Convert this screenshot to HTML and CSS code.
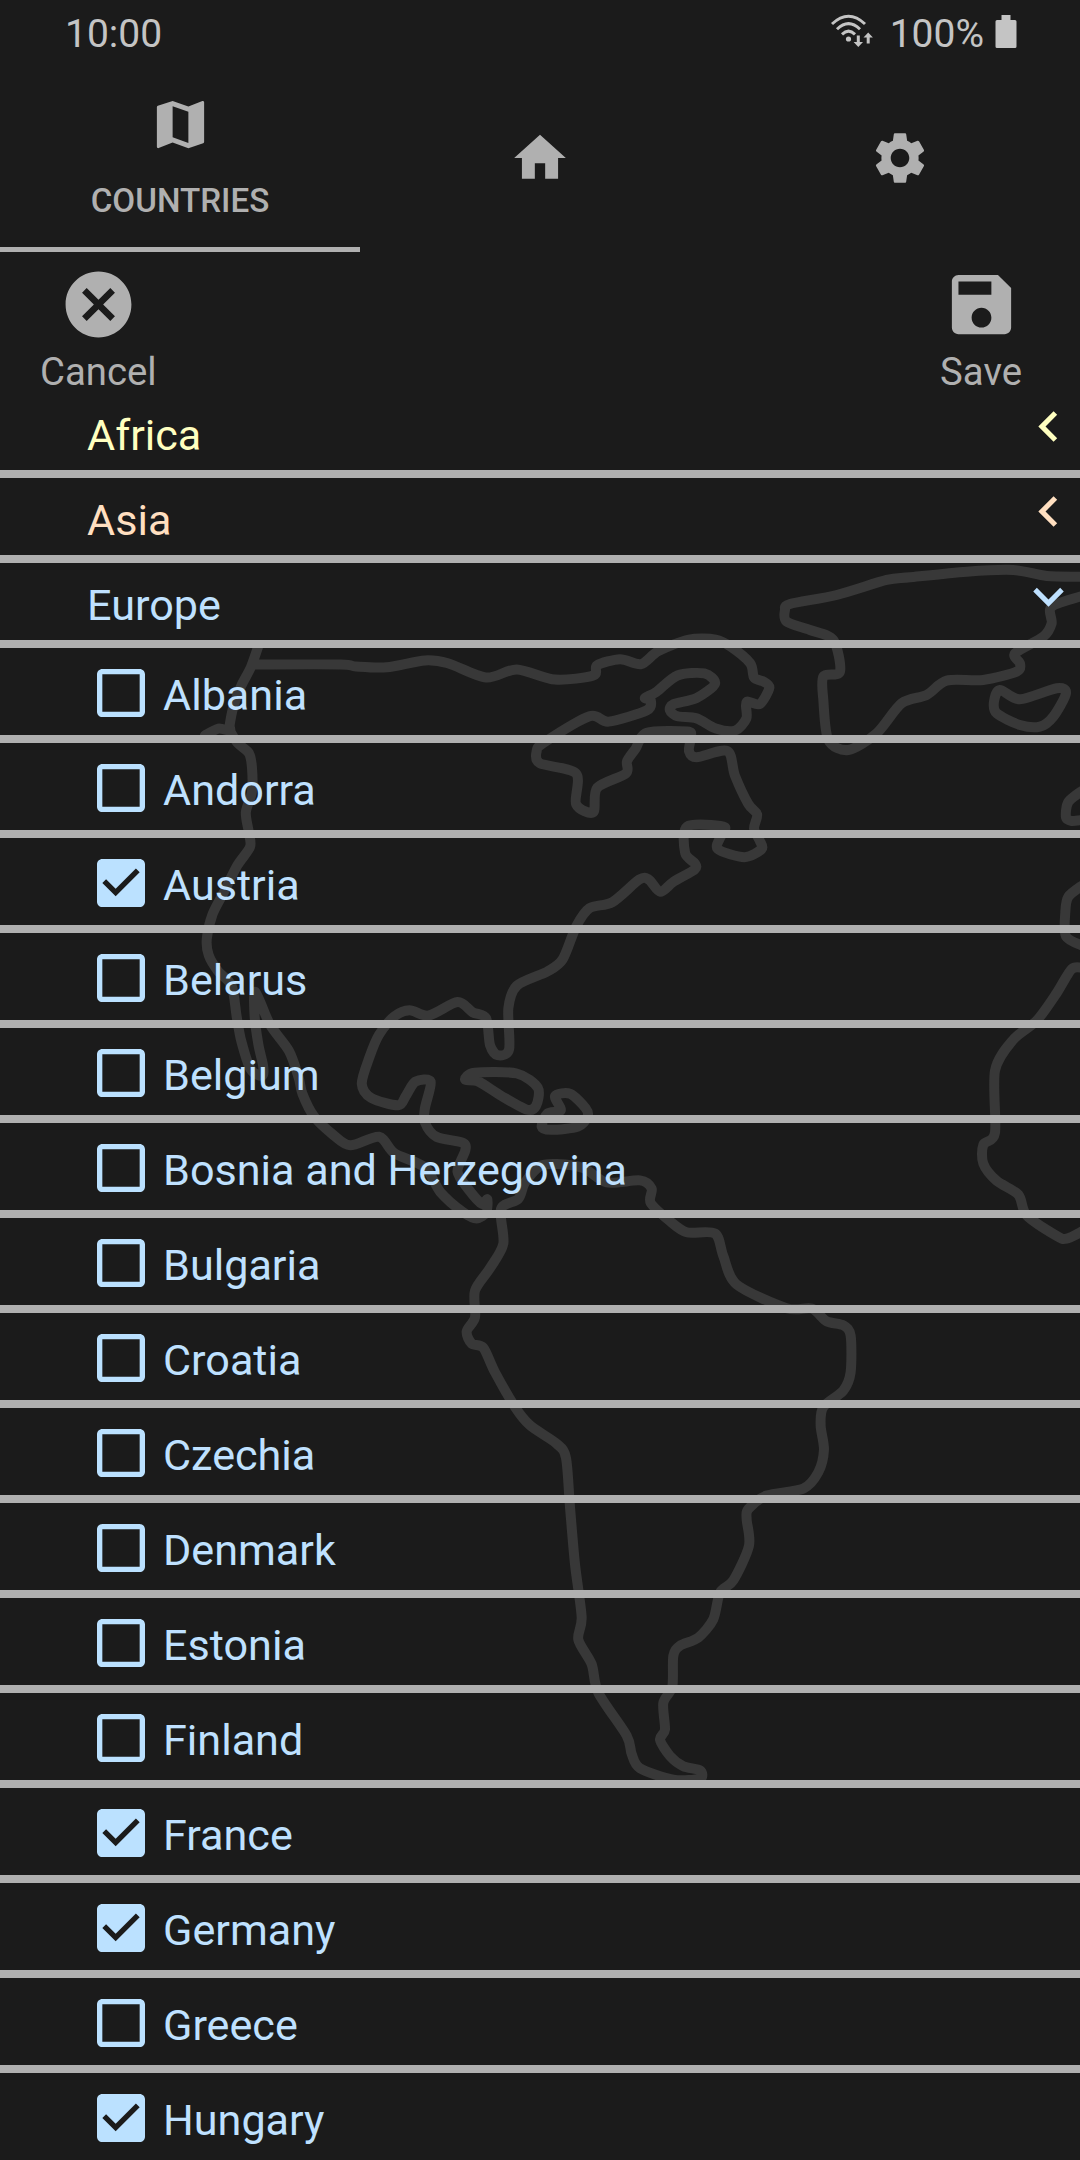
FILE: index.html
```html
<!DOCTYPE html>
<html lang="en">
<head>
<meta charset="utf-8">
<title>Countries</title>
<link rel="stylesheet" href="styles.css">
</head>
<body>
<svg class="world" viewBox="0 0 1080 2160" aria-hidden="true">
  <path transform="translate(180 600) scale(.3827 .4082)" d="M205 112L185 165 160 210 140 260 130 305 130 320 100 315 65 332M130 320L150 350 180 375 188 410 188 470 172 520 180 570 183 605 150 650 115 715 85 770 70 830 75 870 100 910 135 945 148 1020 160 1080 185 1150 215 1165 217 1140 205 1090 195 1020 197 960 235 1040 285 1105 310 1170 320 1210 350 1265 400 1310 445 1336 520 1315 560 1355 640 1390 680 1450 740 1500 775 1515 800 1500 803 1468 790 1480 755 1445 725 1400 745 1350 740 1330 670 1315 640 1280 640 1245 655 1180 615 1180 590 1215 570 1238 500 1220 475 1185 495 1120 520 1065 560 1020 600 1005 650 1018 725 985 765 1010 800 1025 810 1090 830 1115 860 1100 858 1000 880 945 960 910 1000 880 1035 800 1070 755 1130 740 1200 685 1225 685 1255 715 1290 690 1345 660 1345 645 1320 620 1325 555 1420 555 1415 575 1405 610 1475 630 1520 610 1515 590 1500 560 1508 525 1485 500 1450 430 1430 370 1350 385 1330 370 1335 335 1325 322 1220 325 1190 365 1168 395 1165 425 1090 460 1080 520 1035 500 1035 425 940 400 932 370 950 350 1070 285 1120 298 1220 270 1230 245 1215 240 1245 225 1300 185 1370 180 1398 205 1350 240 1290 255 1280 270 1300 285 1350 290 1400 315 1450 320 1480 290 1480 250 1515 255 1540 215 1525 200 1500 190 1490 155 1440 115 1400 97 1330 97 1250 125 1205 157 1150 145 1090 160 1080 185 980 195 880 170 800 190 700 155 640 148 540 165 460 163 420 158 200 158"/>
  <path transform="translate(180 600) scale(.3827 .4082)" d="M745 1175L770 1158 880 1160 935 1195 930 1240 905 1248 840 1215 780 1180zM945 1290L960 1258 995 1250 980 1215 1020 1210 1060 1245 1065 1265 1040 1290 970 1298z"/>
  <path transform="translate(440 1160) scale(.3333 .4082)" d="M183 120L235 95 255 55 300 15 350 10 430 20 500 55 600 50 635 70 632 105 690 150 740 177 825 180 850 235 890 305 1040 363 1115 364 1160 395 1210 405 1232 430 1232 520 1210 565 1150 605 1142 650 1152 710 1135 765 1090 805 980 822 925 855 920 880 927 945 880 1030 840 1060 820 1125 775 1170 720 1190 700 1215 697 1290 670 1330 675 1395 660 1420 690 1460 730 1485 780 1495 780 1515 700 1518 600 1490 575 1455 560 1410 475 1305 455 1235 415 1175 425 1120 405 990 390 850 378 730 350 695 270 650 225 605 165 520 130 460 95 450 80 420 105 385 105 320 150 265 190 205z"/>
  <path transform="translate(760 380) scale(.3333)" d="M970 590L860 588 760 570 620 575 450 592 380 600 230 645 90 672 75 690 80 725 150 750 220 780 240 875 190 890 190 960 205 1080 265 1110 350 1060 425 970 500 945 560 902 670 900 770 875 780 850 765 820 850 770 875 730 875 680 970 647M720 930L780 958 890 925 918 940 880 1010 840 1040 780 1035 710 1000 702 965z"/>
  <path transform="translate(940 740) scale(.3333 .3444)" d="M430 145L385 180 378 225 395 235 430 232M430 420L385 455 376 500 378 570 430 598M430 662L395 665 350 735 290 815 220 870 165 960 165 1140 130 1175 130 1230 170 1280 235 1320 260 1380 350 1440 380 1448 430 1425"/>
</svg>
<svg class="defs" aria-hidden="true">
  <symbol id="box" viewBox="0 0 24 24"><path d="M19 5v14H5V5h14m0-2H5c-1.1 0-2 .9-2 2v14c0 1.100.9 2 2 2h14c1.100 0 2-.9 2-2V5c0-1.100-.9-2-2-2z"/></symbol>
  <symbol id="checked" viewBox="0 0 24 24"><path d="M19 3H5c-1.110 0-2 .9-2 2v14c0 1.100.89 2 2 2h14c1.110 0 2-.9 2-2V5c0-1.100-.89-2-2-2zm-9 14l-5-5 1.410-1.410L10 14.170l7.590-7.590L19 8l-9 9z"/></symbol>
  <symbol id="left" viewBox="0 0 24 24"><path d="M15.410 7.410L14 6l-6 6 6 6 1.410-1.410L10.830 12z"/></symbol>
  <symbol id="down" viewBox="0 0 24 24"><path d="M7.410 8.590L12 13.170l4.590-4.580L18 10l-6 6-6-6z"/></symbol>
</svg>

<div class="screen">
  <header class="status">
    <span class="time">10:00</span>
    <div class="indicators">
      <svg class="wifi" viewBox="0 0 44 34">
        <path class="arc" d="M2 10Q18.500-5.500 35 10M7 15.200Q18.500 4 30 15.200M12 20.400Q18.500 14 25 20.400"/>
        <circle cx="18.500" cy="25" r="2.600"/>
        <path d="M26.800 21.500h3v6.500h3.200l-4.700 5-4.700-5h3.200zM36.700 29.500h3V23.500h3.200L38.200 18.500l-4.700 5h3.200z"/>
      </svg>
      <span class="percent">100%</span>
      <svg class="battery" viewBox="0 0 22 33"><path d="M6.500 0h9v5H20q1.500 0 1.500 1.500v25Q21.500 33 20 33H2Q.5 33 .5 31.500v-25Q.5 5 2 5h4.500z"/></svg>
    </div>
  </header>

  <nav class="tabs">
    <div class="tab active">
      <svg class="tab-icon" viewBox="0 0 24 24"><path d="M20.500 3l-.16.03L15 5.100 9 3 3.360 4.900c-.21.070-.36.250-.36.480V20.500c0 .28.220.5.500.5l.16-.03L9 18.900l6 2.100 5.640-1.900c.21-.07.36-.25.36-.48V3.500c0-.28-.22-.5-.5-.5zM15 19l-6-2.110V5l6 2.110V19z"/></svg>
      <span class="tab-label">COUNTRIES</span>
    </div>
    <div class="tab"><svg class="tab-icon" viewBox="0 0 24 24"><path d="M10 20v-6h4v6h5v-8h3L12 3 2 12h3v8z"/></svg></div>
    <div class="tab"><svg class="tab-icon" viewBox="0 0 24 24"><path d="M19.140 12.940c.04-.3.060-.61.060-.94 0-.32-.02-.64-.07-.94l2.030-1.580c.18-.14.230-.41.120-.61l-1.920-3.320c-.12-.22-.37-.29-.59-.22l-2.390.96c-.5-.38-1.030-.7-1.620-.94l-.36-2.540c-.04-.24-.24-.41-.48-.41h-3.840c-.24 0-.43.170-.47.410l-.36 2.540c-.59.240-1.130.570-1.620.940l-2.390-.96c-.22-.08-.47 0-.59.220L2.740 8.870c-.12.210-.08.470.120.610l2.030 1.580c-.05.300-.09.630-.09.940s.02.640.070.940l-2.030 1.580c-.18.140-.23.410-.12.610l1.920 3.320c.12.220.37.290.59.220l2.390-.96c.5.380 1.030.7 1.620.94l.36 2.540c.05.240.24.410.48.410h3.840c.24 0 .44-.17.470-.41l.36-2.540c.59-.24 1.130-.56 1.620-.94l2.390.96c.22.080.47 0 .59-.22l1.920-3.320c.12-.22.070-.47-.12-.61l-2.010-1.580zM12 15.600c-1.980 0-3.600-1.620-3.600-3.600s1.620-3.600 3.600-3.600 3.600 1.620 3.600 3.600-1.620 3.600-3.600 3.600z"/></svg></div>
  </nav>

  <div class="actions">
    <div class="action">
      <svg class="action-icon" viewBox="0 0 24 24"><path d="M12 2C6.470 2 2 6.470 2 12s4.470 10 10 10 10-4.470 10-10S17.530 2 12 2zm5 13.590L15.590 17 12 13.410 8.410 17 7 15.590 10.590 12 7 8.410 8.410 7 12 10.590 15.590 7 17 8.410 13.410 12 17 15.590z"/></svg>
      <span>Cancel</span>
    </div>
    <div class="action">
      <svg class="action-icon" viewBox="0 0 24 24"><path d="M17 3H5c-1.110 0-2 .9-2 2v14c0 1.100.89 2 2 2h14c1.100 0 2-.9 2-2V7l-4-4zm-5 16c-1.660 0-3-1.340-3-3s1.340-3 3-3 3 1.340 3 3-1.340 3-3 3zm3-10H5V5h10v4z"/></svg>
      <span>Save</span>
    </div>
  </div>

  <main class="list">
    <div class="group africa"><span>Africa</span><svg class="chevron"><use href="#left"/></svg></div>
    <div class="group asia"><span>Asia</span><svg class="chevron"><use href="#left"/></svg></div>
    <div class="group europe"><span>Europe</span><svg class="chevron"><use href="#down"/></svg></div>
    <div class="country"><svg class="check"><use href="#box"/></svg><span>Albania</span></div>
    <div class="country"><svg class="check"><use href="#box"/></svg><span>Andorra</span></div>
    <div class="country"><svg class="check"><use href="#checked"/></svg><span>Austria</span></div>
    <div class="country"><svg class="check"><use href="#box"/></svg><span>Belarus</span></div>
    <div class="country"><svg class="check"><use href="#box"/></svg><span>Belgium</span></div>
    <div class="country"><svg class="check"><use href="#box"/></svg><span>Bosnia and Herzegovina</span></div>
    <div class="country"><svg class="check"><use href="#box"/></svg><span>Bulgaria</span></div>
    <div class="country"><svg class="check"><use href="#box"/></svg><span>Croatia</span></div>
    <div class="country"><svg class="check"><use href="#box"/></svg><span>Czechia</span></div>
    <div class="country"><svg class="check"><use href="#box"/></svg><span>Denmark</span></div>
    <div class="country"><svg class="check"><use href="#box"/></svg><span>Estonia</span></div>
    <div class="country"><svg class="check"><use href="#box"/></svg><span>Finland</span></div>
    <div class="country"><svg class="check"><use href="#checked"/></svg><span>France</span></div>
    <div class="country"><svg class="check"><use href="#checked"/></svg><span>Germany</span></div>
    <div class="country"><svg class="check"><use href="#box"/></svg><span>Greece</span></div>
    <div class="country"><svg class="check"><use href="#checked"/></svg><span>Hungary</span></div>
  </main>
</div>
<script src="coast.js"></script>
</body>
</html>
```
FILE: styles.css
```css
* { box-sizing: border-box; }

body {
  margin: 0;
  background: #1b1b1b;
  color: #b0b0b0;
  font-family: Roboto, sans-serif;
  overflow: hidden;
}

svg { display: block; flex: none; fill: currentColor; }

.defs { position: absolute; width: 0; height: 0; }

/* Map outline behind the list */
.world {
  position: absolute;
  top: 0;
  left: 0;
  width: 1080px;
  height: 2160px;
}

.world path {
  fill: none;
  stroke: #383838;
  stroke-width: 10px;
  stroke-linejoin: round;
  stroke-linecap: round;
  vector-effect: non-scaling-stroke;
}

.screen {
  position: relative;
  display: flex;
  flex-direction: column;
  width: 1080px;
  height: 2160px;
  overflow: hidden;
}

.status {
  flex: none;
  display: flex;
  justify-content: space-between;
  height: 66px;
  padding: 0 63px 0 65px;
  color: #c4c4c4;
  font-size: 39px;
  line-height: 68px;
}

.indicators { display: flex; }
.wifi { width: 44px; height: 34px; margin: 14px 16px 0 0; }
.wifi .arc { fill: none; stroke: currentColor; stroke-width: 3; }
.battery { width: 22px; height: 33px; margin: 15px 0 0 11px; }

.tabs {
  flex: none;
  display: grid;
  grid-template-columns: repeat(3, 1fr);
  height: 186px;
}

.tab {
  display: flex;
  flex-direction: column;
  align-items: center;
  padding-top: 61px;
}

.tab.active { padding-top: 27px; border-bottom: 5px solid #b0b0b0; }
.tab-icon { width: 62px; height: 62px; }
.tab.active .tab-icon { width: 63px; height: 63px; }
.tab-label { margin-top: 25px; font-size: 33.2px; font-weight: 500; line-height: 40px; }

.actions {
  flex: none;
  display: flex;
  justify-content: space-between;
  height: 141px;
  padding: 13px 58px 0 40px;
  font-size: 38.3px;
  line-height: 44px;
}

.action { display: flex; flex-direction: column; align-items: center; gap: 6px; }
.action-icon { width: 79px; height: 79px; }

.list { font-size: 43.15px; }

.group {
  display: flex;
  justify-content: space-between;
  height: 85px;
  padding: 0 1px 0 87px;
  border-bottom: 8px solid #b0b0b0;
  line-height: 85px;
}

.chevron { width: 61px; height: 61px; margin-top: 3px; }

.africa { color: #ffffc0; }
.asia { color: #ffdfc0; }
.europe { color: #bfe1ff; }

.country {
  display: flex;
  gap: 10px;
  height: 95px;
  padding: 0 0 0 89px;
  border-bottom: 8px solid #b0b0b0;
  color: #bfe1ff;
  line-height: 95px;
}

.check { width: 64px; height: 64px; margin-top: 13px; color: #bbe1ff; }
```
FILE: coast.js
```js
// Round the coastline corners: each polyline becomes a Catmull-Rom curve.
document.querySelectorAll('.world path').forEach(function (path) {
  var out = path.getAttribute('d').split('M').filter(Boolean).map(function (part) {
    var closed = part.indexOf('z') >= 0;
    var n = part.match(/[\d.]+/g).map(Number);
    var p = [];
    for (var i = 0; i < n.length; i += 2) p.push([n[i], n[i + 1]]);
    var count = p.length;
    function at(k) {
      return closed ? p[(k + count) % count] : p[Math.max(0, Math.min(count - 1, k))];
    }
    var d = 'M' + p[0].join(' ');
    for (var j = 0; j < (closed ? count : count - 1); j++) {
      var a = at(j - 1), b = at(j), c = at(j + 1), e = at(j + 2);
      d += 'C' + [
        b[0] + (c[0] - a[0]) / 7, b[1] + (c[1] - a[1]) / 7,
        c[0] - (e[0] - b[0]) / 7, c[1] - (e[1] - b[1]) / 7,
        c[0], c[1]
      ].join(' ');
    }
    return d;
  });
  path.setAttribute('d', out.join(''));
});
```
